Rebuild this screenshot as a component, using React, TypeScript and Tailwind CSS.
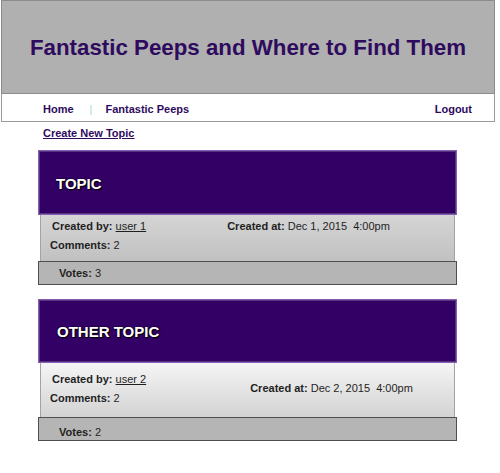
import React from "react";

type CardProps = {
  title: string;
  user: string;
  date: string;
  comments: number;
  votes: number;
  variant: "a" | "b";
};

function Card({ title, user, date, comments, votes, variant }: CardProps) {
  const isA = variant === "a";
  return (
    <section className="w-[419px]">
      <div
        className={
          "bg-[#330066] border border-[#8a5cb8] shadow-[inset_0_0_0_1px_#52357a] flex items-center " +
          (isA ? "h-[65px] pl-[17px] pt-[1px]" : "h-[64px] pl-[18px]")
        }
      >
        <h2 className="text-[15px] font-bold text-white leading-none [text-shadow:0_0_2px_#000,1px_1px_1px_#000]">
          {title}
        </h2>
      </div>
      <div
        className={
          "mx-[2px] border-x border-[#a3a3a3] flex " +
          (isA
            ? "h-[46px] bg-gradient-to-b from-[#d5d5d5] to-[#c1c1c1] items-start pt-[2px]"
            : "h-[54px] bg-gradient-to-b from-[#f5f5f5] to-[#d3d3d3] items-center")
        }
      >
        <div className={"pl-[9px] flex flex-col " + (isA ? "" : "pb-[3px]")}>
          <div className="ml-[2px] leading-[18px] h-[18px]">
            <b>Created by:</b> <span className="underline">{user}</span>
          </div>
          <div className="leading-[18px] h-[18px] mt-[1px]">
            <b>Comments:</b> {comments}
          </div>
        </div>
        <div
          className={
            "leading-[18px] whitespace-pre " +
            (isA ? "ml-[81px]" : "ml-[104px] mb-[4px]")
          }
        >
          <b>Created at:</b> {date}
        </div>
      </div>
      <div
        className={
          "h-[24px] bg-[#b5b5b5] border border-[#4f4f4f] flex items-center pl-[20px] " +
          (isA ? "pt-[1px]" : "pt-[7px]")
        }
      >
        <span>
          <b>Votes:</b> {votes}
        </span>
      </div>
    </section>
  );
}

export default function App() {
  return (
    <div className="w-[500px] h-[473px] bg-white font-['Liberation_Sans',Arial,sans-serif] text-[11px] text-[#1f1f1f] overflow-hidden">
      <header className="ml-[1px] w-[494px] h-[94px] bg-[#b0b0b0] border border-[#8c8c8c] flex items-center justify-center">
        <h1 className="text-[22.3px] font-bold text-[#2e0b5e] leading-none mt-[2px]">
          Fantastic Peeps and Where to Find Them
        </h1>
      </header>
      <nav className="ml-[1px] w-[494px] h-[28px] border-x border-b border-[#9a9a9a] flex items-center pl-[41px] pr-[22px] pt-[3px] font-bold text-[11px] text-[#2e0b5e]">
        <a>Home</a>
        <span className="ml-[16px] mr-[13px] font-normal text-[#a9d6cf]">|</span>
        <a>Fantastic Peeps</a>
        <a className="ml-auto">Logout</a>
      </nav>
      <div className="pl-[43px] mt-[4px] leading-[14px]">
        <a className="font-bold text-[#2e0b5e] underline">Create New Topic</a>
      </div>
      <main className="ml-[38px] mt-[10px] flex flex-col gap-[14px]">
        <Card
          title="TOPIC"
          user="user 1"
          date="Dec 1, 2015  4:00pm"
          comments={2}
          votes={3}
          variant="a"
        />
        <Card
          title="OTHER TOPIC"
          user="user 2"
          date="Dec 2, 2015  4:00pm"
          comments={2}
          votes={2}
          variant="b"
        />
      </main>
    </div>
  );
}
